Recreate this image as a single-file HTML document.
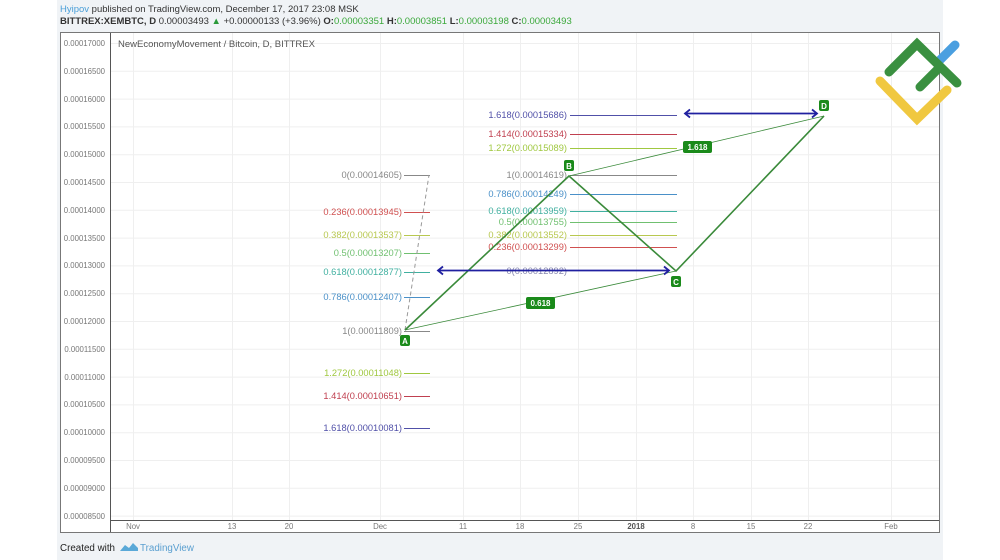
<!DOCTYPE html>
<html><head><meta charset="utf-8"><style>
html,body{margin:0;padding:0;width:1000px;height:560px;background:#fff;overflow:hidden;font-family:"Liberation Sans",sans-serif}
</style></head><body>
<svg width="1000" height="560" xmlns="http://www.w3.org/2000/svg" style="position:absolute;left:0;top:0" font-family="Liberation Sans, sans-serif">
<rect x="57" y="0" width="886" height="560" fill="#f0f3f6"/>
<text x="60" y="12" font-size="9.5" fill="#333"><tspan fill="#4a9fd8">Hyipov</tspan> published on TradingView.com, December 17, 2017 23:08 MSK</text>
<text x="60" y="24" font-size="9.5" fill="#333"><tspan font-weight="bold">BITTREX:XEMBTC, D</tspan> 0.00003493 <tspan fill="#2a9a3a">▲</tspan> +0.00000133 (+3.96%) <tspan font-weight="bold">O:</tspan><tspan fill="#3aa83a">0.00003351</tspan> <tspan font-weight="bold">H:</tspan><tspan fill="#3aa83a">0.00003851</tspan> <tspan font-weight="bold">L:</tspan><tspan fill="#3aa83a">0.00003198</tspan> <tspan font-weight="bold">C:</tspan><tspan fill="#3aa83a">0.00003493</tspan></text>
<rect x="60.5" y="32.5" width="879" height="500" fill="#fff" stroke="#777"/>
<g stroke="#efefef" stroke-width="1">
<line x1="133.5" y1="33" x2="133.5" y2="520"/><line x1="232.5" y1="33" x2="232.5" y2="520"/><line x1="289.5" y1="33" x2="289.5" y2="520"/><line x1="380.5" y1="33" x2="380.5" y2="520"/><line x1="463.5" y1="33" x2="463.5" y2="520"/><line x1="520.5" y1="33" x2="520.5" y2="520"/><line x1="578.5" y1="33" x2="578.5" y2="520"/><line x1="636.5" y1="33" x2="636.5" y2="520"/><line x1="693.5" y1="33" x2="693.5" y2="520"/><line x1="751.5" y1="33" x2="751.5" y2="520"/><line x1="808.5" y1="33" x2="808.5" y2="520"/><line x1="891.5" y1="33" x2="891.5" y2="520"/>
<line x1="110" y1="43.5" x2="939" y2="43.5"/><line x1="110" y1="71.3" x2="939" y2="71.3"/><line x1="110" y1="99.1" x2="939" y2="99.1"/><line x1="110" y1="126.9" x2="939" y2="126.9"/><line x1="110" y1="154.7" x2="939" y2="154.7"/><line x1="110" y1="182.5" x2="939" y2="182.5"/><line x1="110" y1="210.3" x2="939" y2="210.3"/><line x1="110" y1="238.1" x2="939" y2="238.1"/><line x1="110" y1="265.9" x2="939" y2="265.9"/><line x1="110" y1="293.7" x2="939" y2="293.7"/><line x1="110" y1="321.5" x2="939" y2="321.5"/><line x1="110" y1="349.3" x2="939" y2="349.3"/><line x1="110" y1="377.1" x2="939" y2="377.1"/><line x1="110" y1="404.9" x2="939" y2="404.9"/><line x1="110" y1="432.7" x2="939" y2="432.7"/><line x1="110" y1="460.5" x2="939" y2="460.5"/><line x1="110" y1="488.3" x2="939" y2="488.3"/><line x1="110" y1="516.1" x2="939" y2="516.1"/>
</g>
<line x1="110.5" y1="33" x2="110.5" y2="532" stroke="#555"/>
<line x1="110" y1="520.5" x2="939" y2="520.5" stroke="#555"/>
<g font-size="7.8" fill="#777" text-anchor="end">
<text x="105" y="46">0.00017000</text><text x="105" y="74">0.00016500</text><text x="105" y="102">0.00016000</text><text x="105" y="129">0.00015500</text><text x="105" y="157">0.00015000</text><text x="105" y="185">0.00014500</text><text x="105" y="213">0.00014000</text><text x="105" y="241">0.00013500</text><text x="105" y="268">0.00013000</text><text x="105" y="296">0.00012500</text><text x="105" y="324">0.00012000</text><text x="105" y="352">0.00011500</text><text x="105" y="380">0.00011000</text><text x="105" y="407">0.00010500</text><text x="105" y="435">0.00010000</text><text x="105" y="463">0.00009500</text><text x="105" y="491">0.00009000</text><text x="105" y="519">0.00008500</text>
</g>
<g font-size="7.8" fill="#777" text-anchor="middle">
<text x="133" y="529">Nov</text><text x="232" y="529">13</text><text x="289" y="529">20</text><text x="380" y="529">Dec</text><text x="463" y="529">11</text><text x="520" y="529">18</text><text x="578" y="529">25</text><text x="636" y="529" font-weight="bold" fill="#555">2018</text><text x="693" y="529">8</text><text x="751" y="529">15</text><text x="808" y="529">22</text><text x="891" y="529">Feb</text>
</g>
<text x="118" y="47" font-size="9.5" fill="#555">NewEconomyMovement / Bitcoin, D, BITTREX</text>
<g font-size="9.3" text-anchor="end">
<text x="402" y="178" fill="#888">0(0.00014605)</text>
<text x="402" y="215" fill="#d05050">0.236(0.00013945)</text>
<text x="402" y="238" fill="#b8c850">0.382(0.00013537)</text>
<text x="402" y="256" fill="#70c070">0.5(0.00013207)</text>
<text x="402" y="275" fill="#40b0a0">0.618(0.00012877)</text>
<text x="402" y="300" fill="#4a90c8">0.786(0.00012407)</text>
<text x="402" y="334" fill="#888">1(0.00011809)</text>
<text x="402" y="376" fill="#a0c840">1.272(0.00011048)</text>
<text x="402" y="399" fill="#c04050">1.414(0.00010651)</text>
<text x="402" y="431" fill="#5050a8">1.618(0.00010081)</text>
</g>
<g stroke-width="1">
<line x1="404" y1="175.5" x2="430" y2="175.5" stroke="#888"/>
<line x1="404" y1="212.5" x2="430" y2="212.5" stroke="#d05050"/>
<line x1="404" y1="235.5" x2="430" y2="235.5" stroke="#b8c850"/>
<line x1="404" y1="253.5" x2="430" y2="253.5" stroke="#70c070"/>
<line x1="404" y1="272.5" x2="430" y2="272.5" stroke="#40b0a0"/>
<line x1="404" y1="297.5" x2="430" y2="297.5" stroke="#4a90c8"/>
<line x1="404" y1="331.5" x2="430" y2="331.5" stroke="#888"/>
<line x1="404" y1="373.5" x2="430" y2="373.5" stroke="#a0c840"/>
<line x1="404" y1="396.5" x2="430" y2="396.5" stroke="#c04050"/>
<line x1="404" y1="428.5" x2="430" y2="428.5" stroke="#5050a8"/>
</g>
<line x1="405" y1="330" x2="429" y2="175" stroke="#999" stroke-dasharray="4,3"/>
<g font-size="9.3" text-anchor="end">
<text x="567" y="118" fill="#5050a8">1.618(0.00015686)</text>
<text x="567" y="137" fill="#c04050">1.414(0.00015334)</text>
<text x="567" y="151" fill="#a0c840">1.272(0.00015089)</text>
<text x="567" y="178" fill="#888">1(0.00014619)</text>
<text x="567" y="197" fill="#4a90c8">0.786(0.00014249)</text>
<text x="567" y="214" fill="#40b0a0">0.618(0.00013959)</text>
<text x="567" y="225" fill="#70c070">0.5(0.00013755)</text>
<text x="567" y="238" fill="#b8c850">0.382(0.00013552)</text>
<text x="567" y="250" fill="#d05050">0.236(0.00013299)</text>
<text x="567" y="274" fill="#8888b0">0(0.00012892)</text>
</g>
<g>
<line x1="570" y1="115.5" x2="677" y2="115.5" stroke="#5050a8"/>
<line x1="570" y1="134.5" x2="677" y2="134.5" stroke="#c04050"/>
<line x1="570" y1="148.5" x2="677" y2="148.5" stroke="#a0c840"/>
<line x1="570" y1="175.5" x2="677" y2="175.5" stroke="#888"/>
<line x1="570" y1="194.5" x2="677" y2="194.5" stroke="#4a90c8"/>
<line x1="570" y1="211.5" x2="677" y2="211.5" stroke="#40b0a0"/>
<line x1="570" y1="222.5" x2="677" y2="222.5" stroke="#70c070"/>
<line x1="570" y1="235.5" x2="677" y2="235.5" stroke="#b8c850"/>
<line x1="570" y1="247.5" x2="677" y2="247.5" stroke="#d05050"/>
</g>
<polyline points="405,330 569,176 676,271 824,116" fill="none" stroke="#3a8a3a" stroke-width="1.6"/>
<line x1="405" y1="330" x2="676" y2="271" stroke="#3a8a3a" stroke-width="0.8"/>
<line x1="569" y1="176" x2="824" y2="116" stroke="#3a8a3a" stroke-width="0.8"/>
<g stroke="#2020a0" stroke-width="1.8" fill="none">
<line x1="438" y1="270.5" x2="669" y2="270.5"/>
<polyline points="443,266.5 438,270.5 443,274.5"/><polyline points="664,266.5 669,270.5 664,274.5"/>
<line x1="685" y1="113.5" x2="817" y2="113.5"/>
<polyline points="690,109.5 685,113.5 690,117.5"/><polyline points="812,109.5 817,113.5 812,117.5"/>
</g>
<g font-size="8" font-weight="bold" fill="#fff" text-anchor="middle">
<rect x="526" y="297" width="29" height="12" rx="2" fill="#1a8a1a"/><text x="540.5" y="306">0.618</text>
<rect x="683" y="141" width="29" height="12" rx="2" fill="#1a8a1a"/><text x="697.5" y="150">1.618</text>
<rect x="400" y="335" width="10" height="11" rx="2" fill="#1a8a1a"/><text x="405" y="344">A</text>
<rect x="564" y="160" width="10" height="11" rx="2" fill="#1a8a1a"/><text x="569" y="169">B</text>
<rect x="671" y="276" width="10" height="11" rx="2" fill="#1a8a1a"/><text x="676" y="285">C</text>
<rect x="819" y="100" width="10" height="11" rx="2" fill="#1a8a1a"/><text x="824" y="109">D</text>
</g>
<g stroke-linecap="round" fill="none" stroke-width="9">
<line x1="955" y1="45" x2="938" y2="62" stroke="#4a9fe0"/>
<polyline points="880,81 917,119 947,90" stroke="#f0c840"/>
<polyline points="889,72 917,44 957,83" stroke="#3a9040"/>
<line x1="920" y1="87" x2="938" y2="69" stroke="#3a9040"/>
</g>
<text x="60" y="551" font-size="9.8" fill="#222">Created with</text>
<path d="M120 551 l5 -6 l4 3 l4 -5 l5 5 l0 3 z" fill="#5aa9d8"/>
<text x="140" y="551" font-size="9.8" fill="#5a9fd0">TradingView</text>
</svg>
</body></html>
